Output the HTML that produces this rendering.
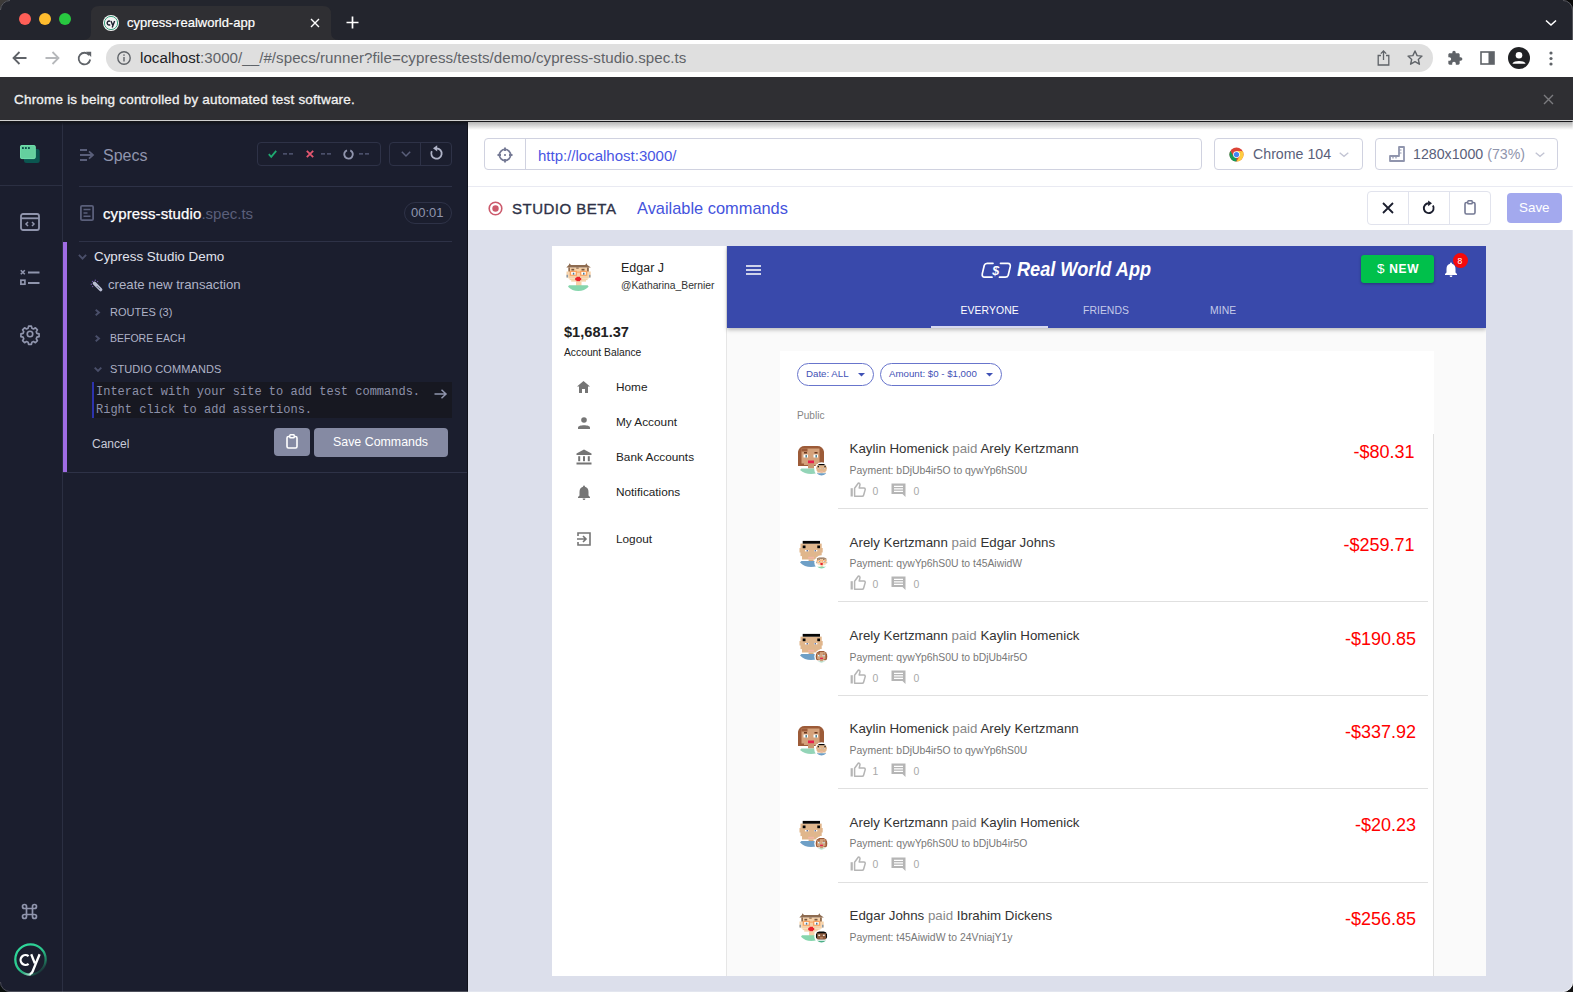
<!DOCTYPE html>
<html><head><meta charset="utf-8">
<style>
*{box-sizing:border-box;margin:0;padding:0}
html,body{width:1573px;height:992px;overflow:hidden;background:#1b1e2e;font-family:"Liberation Sans",sans-serif}
.a{position:absolute}
.t{position:absolute;white-space:nowrap;line-height:1}
svg{position:absolute;overflow:visible}
</style></head><body>
<!-- ============ CHROME TAB STRIP ============ -->
<div class="a" style="left:0;top:0;width:1573px;height:40px;background:#23252d"></div>
<div class="a" style="left:19px;top:13px;width:12px;height:12px;border-radius:50%;background:#fe5f57"></div>
<div class="a" style="left:39px;top:13px;width:12px;height:12px;border-radius:50%;background:#febc2e"></div>
<div class="a" style="left:59px;top:13px;width:12px;height:12px;border-radius:50%;background:#28c840"></div>
<!-- active tab with flares -->
<svg style="left:83px;top:6px" width="256" height="34" viewBox="0 0 256 34"><path d="M0 34 Q8 34 8 26 L8 8 Q8 0 16 0 L240 0 Q248 0 248 8 L248 26 Q248 34 256 34 Z" fill="#2f2f33"/></svg>
<!-- favicon -->
<svg style="left:103px;top:15px" width="16" height="16" viewBox="0 0 16 16"><circle cx="8" cy="8" r="8" fill="#f4f4f4"/><circle cx="8" cy="8" r="6.6" fill="none" stroke="#3aa17e" stroke-width="1"/><path d="M7.2 6.3 A2 2 0 1 0 7.2 9.7" fill="none" stroke="#1b1e2e" stroke-width="1.4"/><path d="M8 6 L9.6 10 M11.6 6 L9.2 12.6" fill="none" stroke="#1b1e2e" stroke-width="1.4"/></svg>
<div class="t" style="left:127px;top:16px;font-size:13px;-webkit-text-stroke:0.2px #fff;color:#fff">cypress-realworld-app</div>
<svg style="left:310px;top:18px" width="10" height="10" viewBox="0 0 10 10"><path d="M1 1 L9 9 M9 1 L1 9" stroke="#fff" stroke-width="1.4"/></svg>
<svg style="left:346px;top:16px" width="13" height="13" viewBox="0 0 13 13"><path d="M6.5 0.5 V12.5 M0.5 6.5 H12.5" stroke="#fff" stroke-width="1.7"/></svg>
<svg style="left:1545px;top:19px" width="12" height="8" viewBox="0 0 12 8"><path d="M1 1.5 L6 6 L11 1.5" fill="none" stroke="#fff" stroke-width="1.6"/></svg>

<!-- ============ CHROME TOOLBAR ============ -->
<div class="a" style="left:0;top:40px;width:1573px;height:37px;background:#fff"></div>
<svg style="left:12px;top:51px" width="15" height="14" viewBox="0 0 15 14"><path d="M14.5 7 H2 M7.5 1 L1.5 7 L7.5 13" fill="none" stroke="#5f6368" stroke-width="1.8"/></svg>
<svg style="left:45px;top:51px" width="15" height="14" viewBox="0 0 15 14"><path d="M0.5 7 H13 M7.5 1 L13.5 7 L7.5 13" fill="none" stroke="#b6b8bb" stroke-width="1.8"/></svg>
<svg style="left:77px;top:51px" width="15" height="15" viewBox="0 0 15 15"><path d="M12.2 4.2 A5.8 5.8 0 1 0 13.2 8.5" fill="none" stroke="#5f6368" stroke-width="1.8"/><path d="M9 0.8 L14.2 0.8 L14.2 6 Z" fill="#5f6368"/></svg>
<div class="a" style="left:106px;top:44px;width:1327px;height:28px;background:#dfdfdf;border-radius:14px"></div>
<svg style="left:117px;top:51px" width="14" height="14" viewBox="0 0 14 14"><circle cx="7" cy="7" r="6.2" fill="none" stroke="#5f6368" stroke-width="1.4"/><rect x="6.3" y="6" width="1.4" height="4.5" fill="#5f6368"/><rect x="6.3" y="3.4" width="1.4" height="1.4" fill="#5f6368"/></svg>
<div class="t" style="left:140px;top:50px;font-size:15.1px;letter-spacing:0.05px;color:#5f6368"><span style="color:#202124">localhost</span>:3000/__/#/specs/runner?file=cypress/tests/demo/cypress-studio.spec.ts</div>
<!-- share icon -->
<svg style="left:1377px;top:50px" width="13" height="16" viewBox="0 0 13 16"><path d="M4 5.5 H1.2 V15 H11.8 V5.5 H9" fill="none" stroke="#5f6368" stroke-width="1.3"/><path d="M6.5 10 V1.2 M3.8 3.6 L6.5 1 L9.2 3.6" fill="none" stroke="#5f6368" stroke-width="1.3"/></svg>
<!-- star -->
<svg style="left:1407px;top:50px" width="16" height="15" viewBox="0 0 16 15"><path d="M8 1 L10.1 5.6 L15 6.1 L11.3 9.4 L12.4 14.2 L8 11.7 L3.6 14.2 L4.7 9.4 L1 6.1 L5.9 5.6 Z" fill="none" stroke="#5f6368" stroke-width="1.4" stroke-linejoin="round"/></svg>
<!-- puzzle -->
<svg style="left:1447px;top:50px" width="16" height="16" viewBox="0 0 24 24"><path fill="#5f6368" d="M20.5 11H19V7c0-1.1-.9-2-2-2h-4V3.5C13 2.12 11.88 1 10.5 1S8 2.12 8 3.5V5H4c-1.1 0-1.99.9-1.99 2v3.8H3.5c1.49 0 2.7 1.21 2.7 2.7s-1.21 2.7-2.7 2.7H2V20c0 1.1.9 2 2 2h3.8v-1.5c0-1.49 1.21-2.7 2.7-2.7 1.49 0 2.7 1.21 2.7 2.7V22H17c1.1 0 2-.9 2-2v-4h1.5c1.38 0 2.5-1.12 2.5-2.5S21.88 11 20.5 11z"/></svg>
<!-- sidebar -->
<svg style="left:1480px;top:51px" width="15" height="14" viewBox="0 0 15 14"><rect x="1" y="1" width="13" height="12" fill="none" stroke="#5f6368" stroke-width="1.6"/><rect x="8.5" y="1" width="5.5" height="12" fill="#5f6368"/></svg>
<!-- profile -->
<svg style="left:1508px;top:47px" width="22" height="22" viewBox="0 0 22 22"><circle cx="11" cy="11" r="11" fill="#202124"/><circle cx="11" cy="8.3" r="3.3" fill="#fff"/><path d="M4.6 16.2 C6 13.4 16 13.4 17.4 16.2 L17.4 16.8 H4.6 Z" fill="#fff"/></svg>
<!-- menu -->
<svg style="left:1549px;top:51px" width="4" height="15" viewBox="0 0 4 15"><circle cx="2" cy="2" r="1.6" fill="#5f6368"/><circle cx="2" cy="7.5" r="1.6" fill="#5f6368"/><circle cx="2" cy="13" r="1.6" fill="#5f6368"/></svg>

<!-- ============ INFOBAR ============ -->
<div class="a" style="left:0;top:77px;width:1573px;height:43px;background:#2f2f33"></div>
<div class="t" style="left:14px;top:92.5px;font-size:13.5px;letter-spacing:0.2px;-webkit-text-stroke:0.3px #f1f1f1;color:#f1f1f1">Chrome is being controlled by automated test software.</div>
<svg style="left:1543px;top:94px" width="11" height="11" viewBox="0 0 11 11"><path d="M1 1 L10 10 M10 1 L1 10" stroke="#7b7b7f" stroke-width="1.4"/></svg>
<div class="a" style="left:0;top:120px;width:1573px;height:1px;background:#d0d0d0"></div>
<!-- ============ CYPRESS LEFT NAV ============ -->
<div class="a" style="left:0;top:121px;width:62px;height:871px;background:#1b1e2e"></div>
<div class="a" style="left:62px;top:121px;width:1px;height:871px;background:#2b2f42"></div>
<div class="a" style="left:0;top:185px;width:62px;height:1px;background:#2b2f42"></div>
<!-- logo -->
<svg style="left:20px;top:145px" width="20" height="18" viewBox="0 0 20 18"><rect x="4" y="4" width="15.7" height="14.1" rx="2.5" fill="#0b5650"/><rect x="0" y="0" width="15.7" height="14.1" rx="2" fill="#64d09e"/><rect x="0.5" y="0.5" width="14.7" height="13.1" rx="1.6" fill="none" stroke="#72dfac" stroke-width="0.8"/><rect x="2" y="2.1" width="1.8" height="1.9" fill="#0c4f4a"/><rect x="5" y="2.1" width="1.8" height="1.9" fill="#0c4f4a"/><rect x="8" y="2.1" width="1.8" height="1.9" fill="#0c4f4a"/></svg>
<!-- code window -->
<svg style="left:20px;top:213px" width="20" height="18" viewBox="0 0 20 18"><rect x="1" y="1" width="18" height="16" rx="2" fill="none" stroke="#9095ad" stroke-width="1.8"/><path d="M1 5.3 H19" stroke="#9095ad" stroke-width="1.8"/><path d="M8 9 L6 11 L8 13 M12 9 L14 11 L12 13" fill="none" stroke="#9095ad" stroke-width="1.5"/></svg>
<!-- test list -->
<svg style="left:20px;top:269px" width="20" height="17" viewBox="0 0 20 17"><path d="M0.8 1.2 L4.8 5.2 M4.8 1.2 L0.8 5.2" stroke="#9095ad" stroke-width="1.6"/><rect x="0.9" y="11.2" width="4" height="4" fill="none" stroke="#9095ad" stroke-width="1.7"/><path d="M8 3.5 H19.5 M8 14 H19.5" stroke="#9095ad" stroke-width="1.9"/></svg>
<!-- gear -->
<svg style="left:19.5px;top:324px" width="20" height="20" viewBox="0 0 24 24"><path fill="none" stroke="#9095ad" stroke-width="2" stroke-linejoin="round" d="M10.3 2.6h3.4l.6 2.6 1.9.8 2.3-1.4 2.4 2.4-1.4 2.3.8 1.9 2.6.6v3.4l-2.6.6-.8 1.9 1.4 2.3-2.4 2.4-2.3-1.4-1.9.8-.6 2.6h-3.4l-.6-2.6-1.9-.8-2.3 1.4-2.4-2.4 1.4-2.3-.8-1.9-2.6-.6v-3.4l2.6-.6.8-1.9-1.4-2.3 2.4-2.4 2.3 1.4 1.9-.8z"/><circle cx="12" cy="12" r="3.3" fill="none" stroke="#9095ad" stroke-width="2"/></svg>
<!-- cmd key -->
<svg style="left:21px;top:903px" width="17" height="17" viewBox="0 0 17 17"><path fill="none" stroke="#9095ad" stroke-width="1.7" d="M5.5 5.5 H11.5 V11.5 H5.5 Z M5.5 5.5 V3.5 A2 2 0 1 0 3.5 5.5 H5.5 M11.5 5.5 H13.5 A2 2 0 1 0 11.5 3.5 V5.5 M11.5 11.5 V13.5 A2 2 0 1 0 13.5 11.5 H11.5 M5.5 11.5 H3.5 A2 2 0 1 0 5.5 13.5 V11.5"/></svg>
<!-- cy logo -->
<svg style="left:14px;top:943px" width="33" height="33" viewBox="0 0 33 33"><defs><linearGradient id="cyg" x1="0.15" y1="0.1" x2="0.85" y2="0.95"><stop offset="0" stop-color="#2fd99b"/><stop offset="0.5" stop-color="#2bc48c"/><stop offset="0.8" stop-color="#1f7a5c"/><stop offset="1" stop-color="#1b1e2e"/></linearGradient><linearGradient id="cyg2" x1="0" y1="0" x2="1" y2="0"><stop offset="0" stop-color="#2fd99b" stop-opacity="0"/><stop offset="1" stop-color="#d8f5ea"/></linearGradient></defs><circle cx="16.5" cy="16.5" r="15.2" fill="none" stroke="url(#cyg)" stroke-width="2.3"/><path d="M6 27.5 A15.2 15.2 0 0 0 16.5 31.7" fill="none" stroke="url(#cyg2)" stroke-width="2.3"/><path d="M14.6 13.2 A4.9 4.9 0 1 0 14.6 20.8" fill="none" stroke="#fff" stroke-width="2.3"/><path d="M17.2 11.3 L20.8 20.3 M25.6 11.3 L18.6 28.5 Q17.8 30.6 15.8 31.2" fill="none" stroke="#fff" stroke-width="2.3"/></svg>

<!-- ============ SPEC PANEL ============ -->
<div class="a" style="left:63px;top:121px;width:404px;height:871px;background:#1b1e2e"></div>
<div class="a" style="left:467px;top:121px;width:1px;height:871px;background:#10121b"></div>
<!-- specs header -->
<svg style="left:80px;top:149px" width="15" height="13" viewBox="0 0 15 13"><path d="M0 1 H7 M0 6 H13 M0 11 H7" stroke="#5a5f7a" stroke-width="1.8"/><path d="M9 2.3 L13 6 L9 9.7" fill="none" stroke="#5a5f7a" stroke-width="1.8"/></svg>
<div class="t" style="left:103px;top:148px;font-size:16px;color:#9095ad">Specs</div>
<div class="a" style="left:257px;top:142px;width:124px;height:24px;border:1px solid #2e3247;border-radius:4px"></div>
<svg style="left:268px;top:150px" width="9" height="8" viewBox="0 0 9 8"><path d="M0.8 4.2 L3.2 6.8 L8.2 0.8" fill="none" stroke="#1fa971" stroke-width="1.8"/></svg>
<svg style="left:283px;top:153px" width="11" height="2" viewBox="0 0 11 2"><rect x="0" y="0" width="4" height="1.7" fill="#4a4f6a"/><rect x="6" y="0" width="4" height="1.7" fill="#4a4f6a"/></svg>
<svg style="left:306px;top:150px" width="8" height="8" viewBox="0 0 8 8"><path d="M0.8 0.8 L7.2 7.2 M7.2 0.8 L0.8 7.2" stroke="#e45770" stroke-width="1.8"/></svg>
<svg style="left:321px;top:153px" width="11" height="2" viewBox="0 0 11 2"><rect x="0" y="0" width="4" height="1.7" fill="#4a4f6a"/><rect x="6" y="0" width="4" height="1.7" fill="#4a4f6a"/></svg>
<svg style="left:343px;top:148.5px" width="11" height="11" viewBox="0 0 11 11"><path d="M7.3 1.4 A4.3 4.3 0 1 1 4 1.3" fill="none" stroke="#9095ad" stroke-width="1.9"/></svg>
<svg style="left:359px;top:153px" width="11" height="2" viewBox="0 0 11 2"><rect x="0" y="0" width="4" height="1.7" fill="#4a4f6a"/><rect x="6" y="0" width="4" height="1.7" fill="#4a4f6a"/></svg>
<div class="a" style="left:389px;top:142px;width:63px;height:24px;border:1px solid #2e3247;border-radius:4px"></div>
<div class="a" style="left:420px;top:143px;width:1px;height:22px;background:#2e3247"></div>
<svg style="left:401px;top:151px" width="10" height="6" viewBox="0 0 10 6"><path d="M0.8 0.8 L5 5 L9.2 0.8" fill="none" stroke="#5a5f7a" stroke-width="1.5"/></svg>
<svg style="left:430px;top:145px" width="13" height="15" viewBox="0 0 13 15"><path d="M1.8 6.2 A5.2 5.2 0 1 0 6.5 3.3" fill="none" stroke="#afb3c7" stroke-width="1.8"/><path d="M7.2 0.2 L7.2 6.4 L3 3.3 Z" fill="#afb3c7"/></svg>
<div class="a" style="left:79px;top:186px;width:373px;height:1px;background:#2e3247"></div>
<!-- spec file row -->
<svg style="left:80px;top:205px" width="14" height="16" viewBox="0 0 14 16"><rect x="0.9" y="0.9" width="12.2" height="14.2" rx="1.2" fill="none" stroke="#5a5f7a" stroke-width="1.8"/><path d="M3.5 4.5 H10.5 M3.5 8 H7.5 M3.5 11.3 H10.5" stroke="#5a5f7a" stroke-width="1.4"/></svg>
<div class="t" style="left:103px;top:206px;font-size:15px;color:#fff;font-weight:400;-webkit-text-stroke:0.25px #fff;letter-spacing:0.12px">cypress-studio<span style="-webkit-text-stroke:0;color:#5a5f7a;letter-spacing:0">.spec.ts</span></div>
<div class="a" style="left:404px;top:202px;width:48px;height:22px;border:1px solid #2e3247;border-radius:11px"></div>
<div class="t" style="left:411px;top:206px;font-size:13px;color:#9095ad">00:01</div>
<div class="a" style="left:79px;top:241px;width:373px;height:1px;background:#2e3247"></div>
<!-- purple bar -->
<div class="a" style="left:63px;top:242px;width:4px;height:230px;background:#a06ce4"></div>
<div class="a" style="left:63px;top:472px;width:404px;height:1px;background:#2e3247"></div>
<svg style="left:78px;top:254px" width="9" height="6" viewBox="0 0 9 6"><path d="M0.9 0.9 L4.5 4.6 L8.1 0.9" fill="none" stroke="#4a4f6a" stroke-width="1.9"/></svg>
<div class="t" style="left:94px;top:250px;font-size:13.4px;color:#e1e3ed">Cypress Studio Demo</div>
<!-- wand -->
<svg style="left:90px;top:279px" width="13" height="13" viewBox="0 0 13 13"><path d="M4.4 4.3 L10.7 10.6" stroke="#b9bdd3" stroke-width="3.4" stroke-linecap="round"/><g fill="#7458ad"><circle cx="2.5" cy="2.5" r="0.7"/><circle cx="5.3" cy="1.3" r="0.7"/><circle cx="7.6" cy="2.6" r="0.7"/><circle cx="1.3" cy="5.2" r="0.7"/><circle cx="2.6" cy="7.6" r="0.7"/></g><g fill="#4a4f6a"><circle cx="7.2" cy="7.4" r="0.5"/><circle cx="8.3" cy="8.4" r="0.5"/><circle cx="9.4" cy="9.5" r="0.5"/></g></svg>
<div class="t" style="left:108px;top:278px;font-size:13.2px;color:#afb3c7">create new transaction</div>
<svg style="left:95px;top:309px" width="5" height="7" viewBox="0 0 5 7"><path d="M0.7 0.7 L4 3.5 L0.7 6.3" fill="none" stroke="#4a4f6a" stroke-width="1.9"/></svg>
<div class="t" style="left:110px;top:307px;font-size:11px;color:#afb3c7">ROUTES (3)</div>
<svg style="left:95px;top:335px" width="5" height="7" viewBox="0 0 5 7"><path d="M0.7 0.7 L4 3.5 L0.7 6.3" fill="none" stroke="#4a4f6a" stroke-width="1.9"/></svg>
<div class="t" style="left:110px;top:333px;font-size:10.5px;color:#afb3c7">BEFORE EACH</div>
<svg style="left:94px;top:367px" width="8" height="5" viewBox="0 0 8 5"><path d="M0.7 0.7 L4 4 L7.3 0.7" fill="none" stroke="#4a4f6a" stroke-width="1.9"/></svg>
<div class="t" style="left:110px;top:363.8px;font-size:11px;color:#afb3c7;letter-spacing:0.1px">STUDIO COMMANDS</div>
<!-- command input -->
<div class="a" style="left:92px;top:382px;width:360px;height:36px;background:#171821"></div>
<div class="a" style="left:92px;top:382px;width:2px;height:36px;background:#2c33ad"></div>
<div class="t" style="left:96px;top:383px;font-family:'Liberation Mono',monospace;font-size:12px;color:#8d91a9;line-height:18px">Interact with your site to add test commands.<br>Right click to add assertions.</div>
<svg style="left:434px;top:389px" width="13" height="10" viewBox="0 0 13 10"><path d="M0.5 5 H12 M7.5 0.8 L12 5 L7.5 9.2" fill="none" stroke="#9095ad" stroke-width="1.5"/></svg>
<div class="t" style="left:92px;top:438px;font-size:12px;color:#c8cad8">Cancel</div>
<div class="a" style="left:274px;top:428px;width:36px;height:28px;background:#858aa3;border-radius:4px"></div>
<svg style="left:286px;top:434px" width="12" height="15" viewBox="0 0 12 15"><rect x="1" y="2.5" width="10" height="11.5" rx="1.5" fill="none" stroke="#fff" stroke-width="1.6"/><rect x="3.8" y="0.8" width="4.4" height="3" rx="0.6" fill="#858aa3" stroke="#fff" stroke-width="1.4"/></svg>
<div class="a" style="left:314px;top:428px;width:134px;height:29px;background:#858aa3;border-radius:4px"></div>
<div class="t" style="left:333px;top:436px;font-size:12.4px;color:#fff">Save Commands</div>
<!-- ============ RIGHT PANEL HEADER ============ -->
<div class="a" style="left:468px;top:121px;width:1105px;height:109px;background:#fff"></div>
<div class="a" style="left:468px;top:122px;width:1105px;height:8px;background:linear-gradient(#b5b5b5,rgba(255,255,255,0))"></div>
<div class="a" style="left:0;top:121px;width:1573px;height:1px;background:#17171b"></div>
<div class="a" style="left:0;top:122px;width:467px;height:4px;background:linear-gradient(#12141c,rgba(27,30,46,0))"></div>
<!-- URL input -->
<div class="a" style="left:484px;top:138px;width:718px;height:32px;border:1px solid #d0d2e0;border-radius:4px"></div>
<div class="a" style="left:525px;top:139px;width:1px;height:30px;background:#d0d2e0"></div>
<svg style="left:497px;top:147px" width="16" height="16" viewBox="0 0 16 16"><circle cx="8" cy="8" r="5.6" fill="none" stroke="#747994" stroke-width="1.7"/><path d="M8 0.5 V4 M8 12 V15.5 M0.5 8 H4 M12 8 H15.5" stroke="#747994" stroke-width="1.9"/><rect x="7.1" y="7.1" width="1.8" height="1.8" fill="#747994"/></svg>
<div class="t" style="left:538px;top:148px;font-size:15px;color:#4956e3">http://localhost:3000/</div>
<!-- browser dropdown -->
<div class="a" style="left:1214px;top:138px;width:149px;height:32px;border:1px solid #d0d2e0;border-radius:4px"></div>
<svg style="left:1228.5px;top:146.5px" width="15" height="15" viewBox="0 0 16 16"><circle cx="8" cy="8" r="7.5" fill="#db4437"/><path d="M8 8 L1.5 11.75 A7.5 7.5 0 0 0 8 15.5 Z" fill="#0f9d58"/><path d="M8 8 L1.5 11.75 A7.5 7.5 0 0 1 1.5 4.25 L4.75 9.9 Z" fill="#0f9d58"/><path d="M8 8 L14.5 4.25 A7.5 7.5 0 0 1 8 15.5 L11.3 9.9 Z" fill="#ffcd40"/><path d="M8 8 L14.5 4.25 L8 4.25 Z" fill="#ffcd40"/><circle cx="8" cy="8" r="3.6" fill="#fff"/><circle cx="8" cy="8" r="2.8" fill="#4285f4"/></svg>
<div class="t" style="left:1253px;top:147px;font-size:14.2px;color:#5a5f7a">Chrome 104</div>
<svg style="left:1339px;top:152px" width="10" height="5" viewBox="0 0 10 5"><path d="M0.7 0.7 L5 4.3 L9.3 0.7" fill="none" stroke="#c2c4d3" stroke-width="1.3"/></svg>
<!-- viewport dropdown -->
<div class="a" style="left:1375px;top:138px;width:183px;height:32px;border:1px solid #d0d2e0;border-radius:4px"></div>
<svg style="left:1389px;top:146px" width="16" height="16" viewBox="0 0 16 16"><path d="M1 15 V10 H10 V1 H15 V15 Z" fill="none" stroke="#9095ad" stroke-width="1.8" stroke-linejoin="round"/><path d="M4 10 V12.5 M7 10 V12.5 M10 4 H12.5 M10 7 H12.5" stroke="#9095ad" stroke-width="1.2"/></svg>
<div class="t" style="left:1413px;top:147px;font-size:14.2px;color:#5a5f7a">1280x1000 <span style="color:#9095ad">(73%)</span></div>
<svg style="left:1535px;top:152px" width="10" height="5" viewBox="0 0 10 5"><path d="M0.7 0.7 L5 4.3 L9.3 0.7" fill="none" stroke="#c2c4d3" stroke-width="1.3"/></svg>
<div class="a" style="left:468px;top:186px;width:1105px;height:1px;background:#e9eaf2"></div>
<!-- studio bar -->
<svg style="left:488px;top:201px" width="15" height="15" viewBox="0 0 15 15"><circle cx="7.5" cy="7.5" r="6.3" fill="none" stroke="#cc5a6c" stroke-width="1.6"/><circle cx="7.5" cy="7.5" r="3.2" fill="#cc5a6c"/></svg>
<div class="t" style="left:512px;top:201px;font-size:15px;font-weight:400;-webkit-text-stroke:0.35px #2e3247;color:#2e3247;letter-spacing:0.5px">STUDIO BETA</div>
<div class="t" style="left:637px;top:200px;font-size:16.4px;color:#4453dd">Available commands</div>
<div class="a" style="left:1367px;top:191px;width:124px;height:34px;border:1px solid #e1e3ed;border-radius:4px"></div>
<div class="a" style="left:1408px;top:192px;width:1px;height:32px;background:#e1e3ed"></div>
<div class="a" style="left:1449px;top:192px;width:1px;height:32px;background:#e1e3ed"></div>
<svg style="left:1382px;top:202px" width="12" height="12" viewBox="0 0 12 12"><path d="M1 1 L11 11 M11 1 L1 11" stroke="#1b1e2e" stroke-width="1.8"/></svg>
<svg style="left:1422px;top:201px" width="14" height="14" viewBox="0 0 14 14"><path d="M10.9 4.6 A4.9 4.9 0 1 1 6.6 2.3" fill="none" stroke="#1b1e2e" stroke-width="1.9"/><path d="M6.1 -0.6 L10 2.3 L6.1 5.2 Z" fill="#1b1e2e"/></svg>
<svg style="left:1464px;top:200px" width="12" height="15" viewBox="0 0 12 15"><rect x="1" y="2.5" width="10" height="11.5" rx="1.5" fill="none" stroke="#747994" stroke-width="1.6"/><rect x="3.8" y="0.8" width="4.4" height="3" rx="0.6" fill="#fff" stroke="#747994" stroke-width="1.4"/></svg>
<div class="a" style="left:1507px;top:193px;width:55px;height:30px;background:#a3a9ee;border-radius:4px"></div>
<div class="t" style="left:1519px;top:201px;font-size:13.4px;color:#fff">Save</div>
<!-- gray background -->
<div class="a" style="left:468px;top:230px;width:1105px;height:762px;background:#dcdfeb"></div>
<!-- ============ AUT ============ -->
<svg width="0" height="0" style="position:absolute">
<defs>
<symbol id="av-w" viewBox="0 0 28 30">
<path d="M7.5 2 H20.5 Q25.5 2 27 7.5 V22 H1 V7.5 Q2.5 2 7.5 2 Z" fill="#9c5b38"/>
<rect x="4.5" y="4.5" width="18" height="15" fill="#d4a27b"/>
<rect x="4.5" y="4.5" width="6" height="3" fill="#9c5b38"/>
<rect x="7" y="19" width="13" height="2" fill="#d4a27b"/>
<rect x="7" y="8" width="3" height="1.5" fill="#6b3a20"/><rect x="17.5" y="8" width="3" height="1.5" fill="#6b3a20"/>
<rect x="6.5" y="10.5" width="4.5" height="3" fill="#fff"/><rect x="16.5" y="10.5" width="4.5" height="3" fill="#fff"/>
<rect x="8.5" y="11" width="1.4" height="2.5" fill="#3d7a8a"/><rect x="18.5" y="11" width="1.4" height="2.5" fill="#3d7a8a"/>
<rect x="11" y="16.5" width="6" height="3" fill="#e6204d"/>
<rect x="11" y="19.5" width="6" height="5" fill="#c99770"/>
<path d="M4.4 24.5 H23.6 L25 26 Q20.5 30 14 30 Q7.5 30 3 26 Z" fill="#93d4b7"/>
</symbol>
<symbol id="av-m" viewBox="0 0 28 30">
<rect x="2.5" y="9" width="23.2" height="4.5" fill="#e0b68c"/>
<rect x="3.5" y="4.6" width="21.2" height="12.5" fill="#e0b68c"/>
<rect x="5" y="17" width="18" height="3.5" fill="#e0b68c"/>
<rect x="5.7" y="1.9" width="17.3" height="2.8" fill="#050505"/>
<rect x="5.7" y="6.5" width="2.8" height="2.7" fill="#050505"/><rect x="20.3" y="6.5" width="2.7" height="2.7" fill="#050505"/>
<rect x="8" y="11" width="3.6" height="1.4" fill="#fff"/><rect x="17" y="11" width="3.3" height="1.4" fill="#fff"/>
<rect x="9.6" y="11" width="1.3" height="1.4" fill="#50659a"/><rect x="17.6" y="11" width="1.3" height="1.4" fill="#50659a"/>
<rect x="11.2" y="17.8" width="5.8" height="1.8" fill="#f2b4a4"/>
<rect x="11.6" y="20.5" width="5" height="1.8" fill="#d9ab80"/>
<path d="M4.4 22 H23.6 L25 23.5 Q20.5 28 14 28 Q7.5 28 3 23.5 Z" fill="#6e9fc6"/>
</symbol>
<symbol id="av-e" viewBox="0 0 28 30">
<rect x="4.4" y="5.5" width="20.4" height="11" fill="#f6d1a7"/>
<rect x="5.6" y="16.5" width="18" height="1.6" fill="#f6d1a7"/>
<rect x="7.2" y="18.1" width="14.8" height="1.5" fill="#f6d1a7"/>
<rect x="2.5" y="9.5" width="2" height="6" fill="#f6d1a7"/><rect x="24.8" y="9.5" width="1.9" height="6" fill="#f6d1a7"/>
<rect x="2.5" y="12.8" width="1.5" height="2.7" fill="#8a9aab"/><rect x="25" y="12.8" width="1.5" height="2.7" fill="#8a9aab"/>
<path d="M2.3 5.6 L4.8 3 L5.6 1.3 L6.9 3 H21.2 L22.5 1.3 L23.3 3 L26.9 5.6 Z" fill="#8d6b50"/>
<rect x="4.4" y="5.5" width="1.6" height="4" fill="#8d6b50"/><rect x="23" y="5.5" width="1.8" height="4" fill="#8d6b50"/>
<rect x="12.2" y="5.5" width="2.5" height="1.2" fill="#8d6b50"/>
<rect x="7.4" y="6.8" width="2.8" height="1.8" fill="#7a5a44"/><rect x="17.5" y="6.8" width="3" height="1.8" fill="#7a5a44"/>
<rect x="5.8" y="8.8" width="7.2" height="5" fill="#f7a260"/><rect x="16" y="8.8" width="7.2" height="5" fill="#f7a260"/>
<rect x="13" y="9.6" width="3" height="1" fill="#f7a260"/>
<rect x="7.2" y="10" width="4.4" height="2.7" fill="#fff"/><rect x="17.4" y="10" width="4.4" height="2.7" fill="#fff"/>
<rect x="8.8" y="10.7" width="1.5" height="2" fill="#4f7a95"/><rect x="19" y="10.7" width="1.5" height="2" fill="#4f7a95"/>
<rect x="11.2" y="15.9" width="6" height="2.3" fill="#e8222c"/><rect x="12.4" y="14.8" width="3.6" height="4.6" fill="#e8222c"/>
<rect x="12" y="19.5" width="5.5" height="5.5" fill="#f6d1a7"/>
<path d="M5 23.2 H23.6 L24.6 24.8 Q20.5 29 14.3 29 Q8 29 4 24.8 Z" fill="#86d6ad"/>
</symbol>
<symbol id="av-d" viewBox="0 0 28 30">
<rect x="2" y="3" width="24" height="17" rx="6" fill="#0a0a0a"/>
<rect x="4.5" y="7" width="19" height="13" fill="#8b5a3c"/>
<rect x="7" y="10" width="4" height="2.5" fill="#fff"/><rect x="17" y="10" width="4" height="2.5" fill="#fff"/>
<rect x="11" y="16" width="6" height="2" fill="#d9a080"/>
<path d="M4 23 H24 V29 H4 Z" fill="#4caf88"/>
</symbol>
<symbol id="thumb" viewBox="0 0 16 15"><path d="M0.6 6.2 H2.8 V14.5 H0.6 Z" fill="#b5b5b5"/><path d="M4.6 6.3 L8.4 1 Q10 1 10 2.6 L9.2 6 H14 Q15.4 6.2 15.2 7.6 L13.6 13.2 Q13.3 14.2 12.2 14.2 H4.6 Z" fill="none" stroke="#b5b5b5" stroke-width="1.5" stroke-linejoin="round"/></symbol>
<symbol id="cmt" viewBox="0 0 15 14"><path d="M0.5 0.5 H14.5 V14 L11.5 11 H0.5 Z" fill="#b5b5b5"/><path d="M3 3.3 H12 M3 5.8 H12 M3 8.3 H12" stroke="#fff" stroke-width="1.2"/></symbol>
<clipPath id="smc"><circle cx="6.5" cy="6.5" r="6"/></clipPath>
</defs>
</svg>

<div class="a" style="left:552px;top:246px;width:934px;height:730px;background:#fafafa;overflow:hidden">
  <!-- drawer -->
  <div class="a" style="left:0;top:0;width:175px;height:730px;background:#fff;border-right:1px solid #e6e6e6"></div>
  <svg style="left:11.5px;top:16.3px" width="28" height="30"><use href="#av-e" width="28" height="30"/></svg>
  <div class="t" style="left:69px;top:16px;font-size:12.5px;color:#222">Edgar J</div>
  <div class="t" style="left:69px;top:35px;font-size:10.3px;color:#333">@Katharina_Bernier</div>
  <div class="t" style="left:12px;top:79px;font-size:14.6px;font-weight:700;color:#222">$1,681.37</div>
  <div class="t" style="left:12px;top:102px;font-size:10.3px;color:#222">Account Balance</div>
  <!-- nav icons -->
  <svg style="left:25px;top:135px" width="13" height="12" viewBox="0 0 13 12"><path d="M6.5 0 L13 5.6 H11 V12 H8 V8 H5 V12 H2 V5.6 H0 Z" fill="#757575"/></svg>
  <div class="t" style="left:64px;top:136px;font-size:11.8px;color:#222">Home</div>
  <svg style="left:26px;top:170.5px" width="12" height="12" viewBox="0 0 12 12"><circle cx="6" cy="3" r="2.8" fill="#757575"/><path d="M0 12 V10.5 C0 7.5 12 7.5 12 10.5 V12 Z" fill="#757575"/></svg>
  <div class="t" style="left:64px;top:171px;font-size:11.8px;color:#222">My Account</div>
  <svg style="left:24px;top:203px" width="16" height="16" viewBox="0 0 16 16"><path d="M8 0.5 L15.5 4.5 V6 H0.5 V4.5 Z" fill="#757575"/><rect x="2.2" y="7.2" width="2" height="5" fill="#757575"/><rect x="7" y="7.2" width="2" height="5" fill="#757575"/><rect x="11.8" y="7.2" width="2" height="5" fill="#757575"/><rect x="0.5" y="13.5" width="15" height="2" fill="#757575"/></svg>
  <div class="t" style="left:64px;top:206px;font-size:11.8px;color:#222">Bank Accounts</div>
  <svg style="left:26px;top:239px" width="12" height="15" viewBox="0 0 12 15"><path d="M6 0.5 Q7 0.5 7 1.8 Q10.5 2.8 10.5 7 V10.5 L12 12 V13 H0 V12 L1.5 10.5 V7 Q1.5 2.8 5 1.8 Q5 0.5 6 0.5 Z" fill="#757575"/><path d="M4.6 13.5 H7.4 Q7.4 15 6 15 Q4.6 15 4.6 13.5 Z" fill="#757575"/></svg>
  <div class="t" style="left:64px;top:241px;font-size:11.8px;color:#222">Notifications</div>
  <svg style="left:25px;top:286px" width="14" height="14" viewBox="0 0 14 14"><path d="M1 4 V1 H13 V13 H1 V10" fill="none" stroke="#757575" stroke-width="1.6"/><path d="M0 7 H8.5 M6 4 L9 7 L6 10" fill="none" stroke="#757575" stroke-width="1.6"/></svg>
  <div class="t" style="left:64px;top:288px;font-size:11.8px;color:#222">Logout</div>

  <!-- app bar -->
  <div class="a" style="left:175px;top:0;width:759px;height:82px;background:#3949ab;box-shadow:0 2px 4px rgba(0,0,0,0.25)"></div>
  <svg style="left:194px;top:19px" width="15" height="10" viewBox="0 0 15 10"><path d="M0 1 H15 M0 5 H15 M0 9 H15" stroke="#fff" stroke-width="1.6"/></svg>
  <svg style="left:429px;top:15.5px" width="31" height="17" viewBox="0 0 31 17"><path d="M12 1.3 H6.2 Q4 1.3 3.3 3.3 L1.3 11.6 Q0.7 15.2 3.6 15.2 H11" fill="none" stroke="#fff" stroke-width="1.7" stroke-linecap="round"/><path d="M18.5 15.2 H24.3 Q26.5 15.2 27.2 13.2 L29.2 4.9 Q29.8 1.3 26.9 1.3 H19.5" fill="none" stroke="#fff" stroke-width="1.7" stroke-linecap="round"/><text x="11.2" y="13.3" font-family="Liberation Sans" font-weight="700" font-style="italic" font-size="12.5" fill="#fff">$</text></svg>
  <div class="t" style="left:465px;top:13px;font-size:20.5px;font-weight:700;font-style:italic;color:#fff;transform:scaleX(0.885);transform-origin:0 0">Real World App</div>
  <div class="a" style="left:809px;top:9px;width:73px;height:28px;background:#00c04b;border-radius:3px;box-shadow:0 1px 3px rgba(0,0,0,0.3)"></div>
  <div class="t" style="left:825px;top:16px;font-size:12px;font-weight:700;color:#fff;letter-spacing:0.7px"><span style="font-weight:400;font-size:13.5px">$</span> NEW</div>
  <svg style="left:893px;top:16px" width="12" height="15" viewBox="0 0 12 15"><path d="M6 0.5 Q7 0.5 7 1.8 Q10.5 2.8 10.5 7 V10.5 L12 12 V13 H0 V12 L1.5 10.5 V7 Q1.5 2.8 5 1.8 Q5 0.5 6 0.5 Z" fill="#fff"/><path d="M4.6 13.5 H7.4 Q7.4 15 6 15 Q4.6 15 4.6 13.5 Z" fill="#fff"/></svg>
  <div class="a" style="left:901px;top:7px;width:15px;height:15px;border-radius:50%;background:#f50a0a"></div>
  <div class="t" style="left:905.5px;top:10.5px;font-size:8.5px;color:#fff">8</div>
  <div class="t" style="left:408.5px;top:60px;font-size:10.4px;color:#fff;letter-spacing:0.1px">EVERYONE</div>
  <div class="t" style="left:531px;top:60px;font-size:10.4px;color:#c5cae9;letter-spacing:0.05px">FRIENDS</div>
  <div class="t" style="left:658px;top:60px;font-size:10.4px;color:#c5cae9;letter-spacing:0.05px">MINE</div>
  <div class="a" style="left:379px;top:80px;width:117px;height:2px;background:#d6d8f0"></div>

  <!-- paper -->
  <div class="a" style="left:228px;top:105px;width:654px;height:625px;background:#fff"></div>
  <div class="a" style="left:881px;top:188px;width:1px;height:542px;background:#e0e0e0"></div>
  <div class="a" style="left:245px;top:117px;width:77px;height:23px;border:1px solid #6875cc;border-radius:12px"></div>
  <div class="t" style="left:254px;top:123px;font-size:9.7px;color:#3f51b5">Date: ALL</div>
  <svg style="left:306px;top:127px" width="7" height="4" viewBox="0 0 7 4"><path d="M0 0 H7 L3.5 3.5 Z" fill="#3f51b5"/></svg>
  <div class="a" style="left:328px;top:117px;width:122px;height:23px;border:1px solid #6875cc;border-radius:12px"></div>
  <div class="t" style="left:337px;top:123px;font-size:9.7px;color:#3f51b5">Amount: $0 - $1,000</div>
  <svg style="left:434px;top:127px" width="7" height="4" viewBox="0 0 7 4"><path d="M0 0 H7 L3.5 3.5 Z" fill="#3f51b5"/></svg>
  <div class="t" style="left:245px;top:165px;font-size:10.1px;color:#858585">Public</div>
  <svg style="left:245px;top:198.0px" width="28" height="30"><use href="#av-w" width="28" height="30"/></svg>
  <svg style="left:263px;top:217.0px" width="14" height="15"><circle cx="6.5" cy="6.5" r="7.2" fill="#fff"/><g clip-path="url(#smc)"><use href="#av-m" x="0" y="0" width="13" height="14"/></g></svg>
  <div class="t" style="left:297.6px;top:196.2px;font-size:13.3px;color:#333">Kaylin Homenick <span style="color:#888">paid</span> Arely Kertzmann</div>
  <div class="t" style="left:297.6px;top:219.8px;font-size:10.4px;color:#787878">Payment: bDjUb4ir5O to qywYp6hS0U</div>
  <svg style="left:297.6px;top:236.0px" width="16" height="15"><use href="#thumb" width="16" height="15"/></svg>
  <div class="t" style="left:320.5px;top:240.7px;font-size:10.4px;color:#a8a8a8">0</div>
  <svg style="left:339.0px;top:237.0px" width="15" height="14"><use href="#cmt" width="15" height="14"/></svg>
  <div class="t" style="left:361.4px;top:240.7px;font-size:10.4px;color:#a8a8a8">0</div>
  <div class="t" style="right:71.5px;top:196.7px;font-size:18px;color:#ff0000">-$80.31</div>
  <div class="a" style="left:285.6px;top:262.0px;width:590px;height:1px;background:#e0e0e0"></div>
  <svg style="left:245px;top:292.9px" width="28" height="30"><use href="#av-m" width="28" height="30"/></svg>
  <svg style="left:263px;top:310.4px" width="14" height="15"><circle cx="6.5" cy="6.5" r="7.2" fill="#fff"/><g clip-path="url(#smc)"><use href="#av-e" x="0" y="0" width="13" height="14"/></g></svg>
  <div class="t" style="left:297.6px;top:289.6px;font-size:13.3px;color:#333">Arely Kertzmann <span style="color:#888">paid</span> Edgar Johns</div>
  <div class="t" style="left:297.6px;top:313.2px;font-size:10.4px;color:#787878">Payment: qywYp6hS0U to t45AiwidW</div>
  <svg style="left:297.6px;top:329.4px" width="16" height="15"><use href="#thumb" width="16" height="15"/></svg>
  <div class="t" style="left:320.5px;top:334.1px;font-size:10.4px;color:#a8a8a8">0</div>
  <svg style="left:339.0px;top:330.4px" width="15" height="14"><use href="#cmt" width="15" height="14"/></svg>
  <div class="t" style="left:361.4px;top:334.1px;font-size:10.4px;color:#a8a8a8">0</div>
  <div class="t" style="right:71.5px;top:290.1px;font-size:18px;color:#ff0000">-$259.71</div>
  <div class="a" style="left:285.6px;top:355.4px;width:590px;height:1px;background:#e0e0e0"></div>
  <svg style="left:245px;top:386.3px" width="28" height="30"><use href="#av-m" width="28" height="30"/></svg>
  <svg style="left:263px;top:403.8px" width="14" height="15"><circle cx="6.5" cy="6.5" r="7.2" fill="#fff"/><g clip-path="url(#smc)"><use href="#av-w" x="0" y="0" width="13" height="14"/></g></svg>
  <div class="t" style="left:297.6px;top:383.0px;font-size:13.3px;color:#333">Arely Kertzmann <span style="color:#888">paid</span> Kaylin Homenick</div>
  <div class="t" style="left:297.6px;top:406.6px;font-size:10.4px;color:#787878">Payment: qywYp6hS0U to bDjUb4ir5O</div>
  <svg style="left:297.6px;top:422.8px" width="16" height="15"><use href="#thumb" width="16" height="15"/></svg>
  <div class="t" style="left:320.5px;top:427.5px;font-size:10.4px;color:#a8a8a8">0</div>
  <svg style="left:339.0px;top:423.8px" width="15" height="14"><use href="#cmt" width="15" height="14"/></svg>
  <div class="t" style="left:361.4px;top:427.5px;font-size:10.4px;color:#a8a8a8">0</div>
  <div class="t" style="right:70px;top:383.5px;font-size:18px;color:#ff0000">-$190.85</div>
  <div class="a" style="left:285.6px;top:448.8px;width:590px;height:1px;background:#e0e0e0"></div>
  <svg style="left:245px;top:478.2px" width="28" height="30"><use href="#av-w" width="28" height="30"/></svg>
  <svg style="left:263px;top:497.2px" width="14" height="15"><circle cx="6.5" cy="6.5" r="7.2" fill="#fff"/><g clip-path="url(#smc)"><use href="#av-m" x="0" y="0" width="13" height="14"/></g></svg>
  <div class="t" style="left:297.6px;top:476.4px;font-size:13.3px;color:#333">Kaylin Homenick <span style="color:#888">paid</span> Arely Kertzmann</div>
  <div class="t" style="left:297.6px;top:500.0px;font-size:10.4px;color:#787878">Payment: bDjUb4ir5O to qywYp6hS0U</div>
  <svg style="left:297.6px;top:516.2px" width="16" height="15"><use href="#thumb" width="16" height="15"/></svg>
  <div class="t" style="left:320.5px;top:520.9px;font-size:10.4px;color:#a8a8a8">1</div>
  <svg style="left:339.0px;top:517.2px" width="15" height="14"><use href="#cmt" width="15" height="14"/></svg>
  <div class="t" style="left:361.4px;top:520.9px;font-size:10.4px;color:#a8a8a8">0</div>
  <div class="t" style="right:70px;top:476.9px;font-size:18px;color:#ff0000">-$337.92</div>
  <div class="a" style="left:285.6px;top:542.2px;width:590px;height:1px;background:#e0e0e0"></div>
  <svg style="left:245px;top:573.1px" width="28" height="30"><use href="#av-m" width="28" height="30"/></svg>
  <svg style="left:263px;top:590.6px" width="14" height="15"><circle cx="6.5" cy="6.5" r="7.2" fill="#fff"/><g clip-path="url(#smc)"><use href="#av-w" x="0" y="0" width="13" height="14"/></g></svg>
  <div class="t" style="left:297.6px;top:569.8px;font-size:13.3px;color:#333">Arely Kertzmann <span style="color:#888">paid</span> Kaylin Homenick</div>
  <div class="t" style="left:297.6px;top:593.4px;font-size:10.4px;color:#787878">Payment: qywYp6hS0U to bDjUb4ir5O</div>
  <svg style="left:297.6px;top:609.6px" width="16" height="15"><use href="#thumb" width="16" height="15"/></svg>
  <div class="t" style="left:320.5px;top:614.3px;font-size:10.4px;color:#a8a8a8">0</div>
  <svg style="left:339.0px;top:610.6px" width="15" height="14"><use href="#cmt" width="15" height="14"/></svg>
  <div class="t" style="left:361.4px;top:614.3px;font-size:10.4px;color:#a8a8a8">0</div>
  <div class="t" style="right:70px;top:570.3px;font-size:18px;color:#ff0000">-$20.23</div>
  <div class="a" style="left:285.6px;top:635.6px;width:590px;height:1px;background:#e0e0e0"></div>
  <svg style="left:245px;top:666.0px" width="28" height="30"><use href="#av-e" width="28" height="30"/></svg>
  <svg style="left:263px;top:684.0px" width="14" height="15"><circle cx="6.5" cy="6.5" r="7.2" fill="#fff"/><g clip-path="url(#smc)"><use href="#av-d" x="0" y="0" width="13" height="14"/></g></svg>
  <div class="t" style="left:297.6px;top:663.2px;font-size:13.3px;color:#333">Edgar Johns <span style="color:#888">paid</span> Ibrahim Dickens</div>
  <div class="t" style="left:297.6px;top:686.8px;font-size:10.4px;color:#787878">Payment: t45AiwidW to 24VniajY1y</div>
  <div class="t" style="right:70px;top:663.7px;font-size:18px;color:#ff0000">-$256.85</div>
</div>
<!-- window edges -->
<div class="a" style="left:0;top:991px;width:1573px;height:1px;background:rgba(255,255,255,0.22)"></div>
<div class="a" style="left:1572px;top:0;width:1px;height:40px;background:#55565c"></div>
<div class="a" style="left:1572px;top:121px;width:1px;height:861px;background:rgba(255,255,255,0.3)"></div>
<svg style="left:0;top:0" width="10" height="10" viewBox="0 0 10 10"><path d="M0 0 H10 A10 10 0 0 0 0 10 Z" fill="#3c3a38"/><path d="M10 0.5 A9.5 9.5 0 0 0 0.5 10" fill="none" stroke="#5a5b60" stroke-width="1"/></svg>
<svg style="left:1563px;top:0" width="10" height="10" viewBox="0 0 10 10"><path d="M0 0 H10 V10 A10 10 0 0 0 0 0 Z" fill="#0a0a0a"/><path d="M0 0.5 A9.5 9.5 0 0 1 9.5 10" fill="none" stroke="#55565c" stroke-width="1"/></svg>
<svg style="left:0;top:982px" width="10" height="10" viewBox="0 0 10 10"><path d="M0 0 A10 10 0 0 0 10 10 H0 Z" fill="#0a0f0d"/><path d="M0.5 0 A9.5 9.5 0 0 0 10 9.5" fill="none" stroke="#4a4b55" stroke-width="1"/></svg>
<svg style="left:1563px;top:982px" width="10" height="10" viewBox="0 0 10 10"><path d="M10 0 A10 10 0 0 1 0 10 H10 Z" fill="#111"/><path d="M9.5 0 A9.5 9.5 0 0 1 0 9.5" fill="none" stroke="#f0f1f6" stroke-width="1"/></svg>
</body></html>
